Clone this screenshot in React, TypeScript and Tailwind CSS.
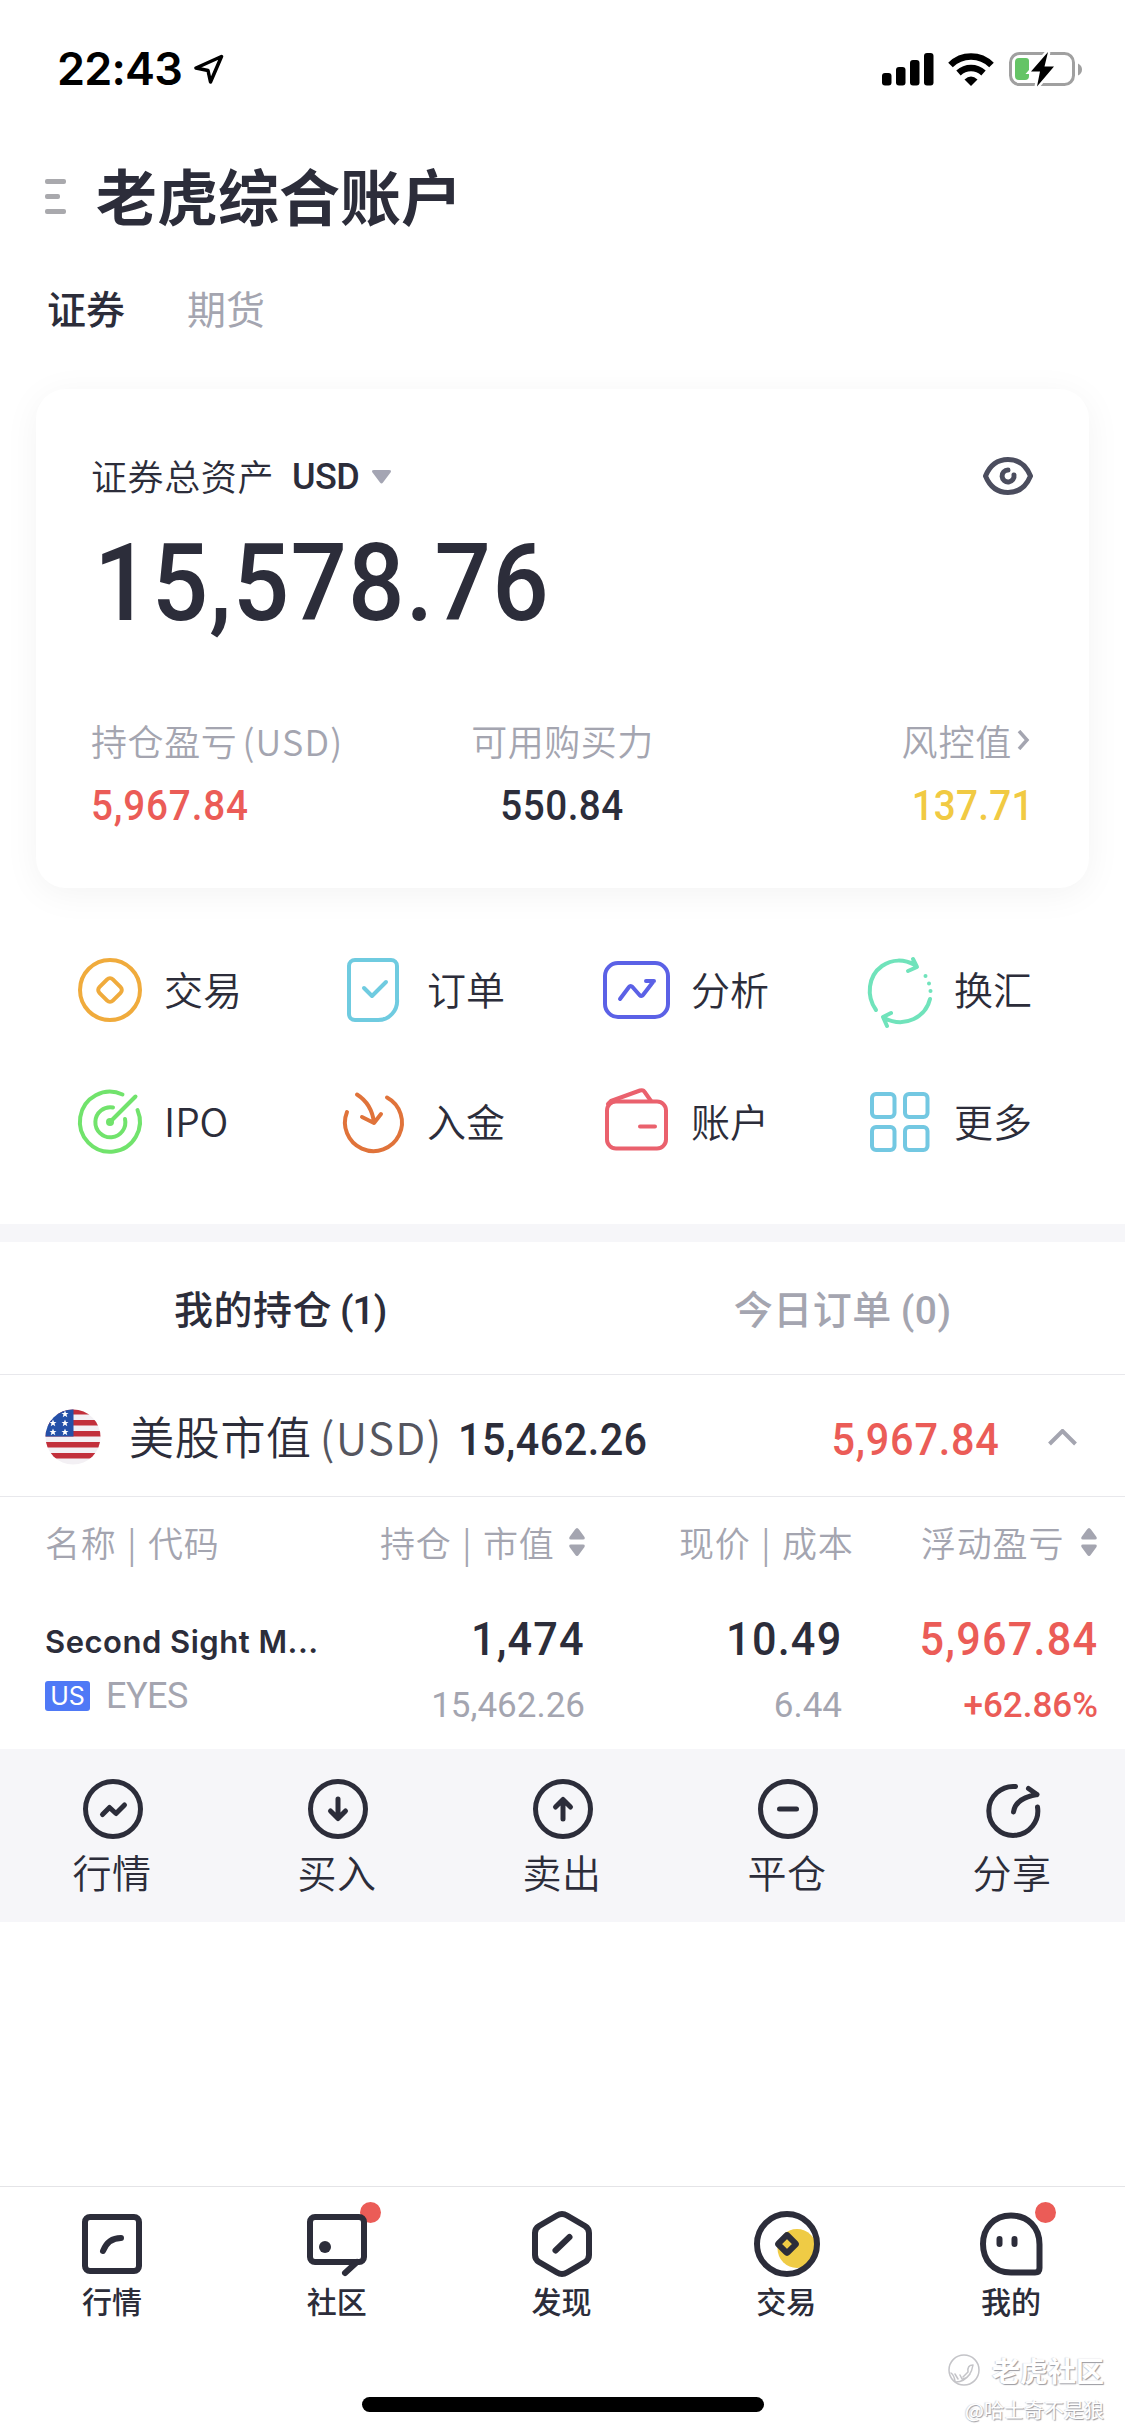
import type { ReactNode } from "react";
import clsx from "clsx";

type IconProps = {
    children: ReactNode
    className?: string
    size?: number
    width?: number
}
// stroke icon drawn at 1:1 pixels
function Icon({ children, className, size = 72, width = 4 }: IconProps) {
    return <svg
        className={clsx("shrink-0 overflow-visible", className)}
        width={size}
        height={size}
        viewBox={`0 0 ${size} ${size}`}
        fill="none"
        stroke="currentColor"
        strokeWidth={width}
        strokeLinecap="round"
        strokeLinejoin="round"
    >
        {children}
    </svg>
}

// slightly condensed figures
function Num({ children, className }: { children: string, className?: string }) {
    return <span className={clsx("inline-block scale-x-[0.92] font-['Roboto'] font-medium", className)}>{children}</span>
}

const shortcuts = [
    {
        label: "交易", color: "text-[#f0ab3c]", icon: <>
            <circle cx="36" cy="36" r="30" />
            <rect x="26.5" y="26.5" width="19" height="19" rx="4" transform="rotate(45 36 36)" />
        </>
    },
    {
        label: "订单", color: "text-[#6fcbe0]", icon: <>
            <path d="M18 6h36a6 6 0 0 1 6 6v33a19 19 0 0 1-19 21H18a6 6 0 0 1-6-6V12a6 6 0 0 1 6-6Z" />
            <path d="M27 34l8 8 14-14" />
        </>
    },
    {
        label: "分析", color: "text-[#5b61e6]", icon: <>
            <rect x="4" y="9" width="63" height="54" rx="13" />
            <path d="M19 45l9-12q1.500-2 3.500 0l7 8q2 2 3.500 0L52 28M45 27h8" />
        </>
    },
    {
        label: "换汇", color: "text-[#70e3bb]", icon: <>
            <path d="M12 56C2 42 4 22 18 12c10-7 22-7 33-1M49 5l4 8-9 4" />
            <path d="M66 45C62 62 42 75 20 64M27 59l-8 4 4 9" />
            <circle cx="61.500" cy="22" r="2" fill="currentColor" stroke="none" />
            <circle cx="65" cy="29.500" r="2" fill="currentColor" stroke="none" />
            <circle cx="66.500" cy="37" r="2" fill="currentColor" stroke="none" />
        </>
    },
    {
        label: "IPO", color: "text-[#71e36c]", icon: <>
            <path d="M48.500 8.500A30 30 0 1 0 63.500 24" />
            <path d="M39 21.500A15 15 0 1 0 51 33" />
            <path d="M36 36L61.500 10.500" />
            <circle cx="36" cy="36" r="4" fill="currentColor" stroke="none" />
        </>
    },
    {
        label: "入金", color: "text-[#e0733a]", icon: <>
            <path d="M10 26A28.500 28.500 0 1 0 50 11.500" />
            <path d="M20 8.500Q35 18 37 37M25 31l12 6 7-9" />
        </>
    },
    {
        label: "账户", color: "text-[#ea616d]", icon: <>
            <rect x="6" y="15.500" width="59" height="47" rx="9" />
            <path d="M7 18l3-3L39 4.500q3.500-1 5 2L50 15M39 40.500h15" />
        </>
    },
    {
        label: "更多", color: "text-[#73c8e2]", icon: <>
            <rect x="8" y="8" width="22.500" height="23" rx="4" />
            <rect x="41" y="8" width="22.500" height="23" rx="4" />
            <rect x="8" y="41" width="22.500" height="23" rx="4" />
            <rect x="41" y="41" width="22.500" height="23" rx="4" />
        </>
    },
];

const actions = [
    { label: "行情", icon: <><circle cx="36" cy="36" r="27.500" /><path d="M25.500 41.500l7-7 6.500 6 8.500-8.500" /></> },
    { label: "买入", icon: <><circle cx="36" cy="36" r="27.500" /><path d="M36 26v19M28.500 38l7.500 7.500 7.500-7.500" /></> },
    { label: "卖出", icon: <><circle cx="36" cy="36" r="27.500" /><path d="M36 46V27M28.500 34l7.500-7.500 7.500 7.500" /></> },
    { label: "平仓", icon: <><circle cx="36" cy="36" r="27.500" /><path d="M27.500 36h17" /></> },
    { label: "分享", icon: <><path d="M38.500 13.500A24.500 24.500 0 1 0 60.500 34" /><path d="M36.500 39Q38.500 25 60 21.500M51.500 15.500l8.500 6" /></> },
];

const tabs = [
    { label: "行情", icon: <><rect x="9" y="9" width="54" height="54" rx="5" /><path d="M27 43q5-13 18-13" /></> },
    {
        label: "社区", dot: true, icon: <>
            <rect x="9" y="9" width="54" height="45" rx="5" />
            <path d="M56 54l-12 11" />
            <circle cx="24" cy="39" r="6" fill="currentColor" stroke="none" />
        </>
    },
    { label: "发现", icon: <><path d="M31 7.500q5-3 10 0l18 10.500q4 2.500 4 7v22q0 4.500-4 7L41 64.500q-5 3-10 0L13 54q-4-2.500-4-7V25q0-4.500 4-7Z" /><path d="M29.500 42.500L43.500 29" /></> },
    {
        label: "交易", icon: <>
            <circle cx="46" cy="40.500" r="19.500" fill="#efcb45" stroke="none" />
            <circle cx="36" cy="36" r="30" />
            <rect x="29.500" y="29.500" width="13" height="13" rx="1" transform="rotate(45 36 36)" />
        </>
    },
    {
        label: "我的", dot: true, icon: <>
            <path d="M35 7.500c17 0 28.500 12 28.500 29V60q0 4.500-4.500 4.500H35C17 64.500 7 52 7 36S18 7.500 35 7.500Z" />
            <path d="M23.500 31v5M38.500 31v5" />
        </>
    },
];

function SortArrows() {
    return <svg className="shrink-0" width="16" height="28" viewBox="0 0 16 28" fill="#a4a5b0">
        <path d="M8 0q1 0 2 1.500L15.500 9q1 2.500-1.500 2.500H2Q-.500 11.500.500 9L6 1.500Q7 0 8 0Z" />
        <path d="M8 28q1 0 2-1.500L15.500 19q1-2.500-1.500-2.500H2Q-.500 16.500.500 19L6 26.500Q7 28 8 28Z" />
    </svg>
}

function StatusBar() {
    return <div className="flex h-[138px] items-center pl-[57px] pr-[43px] text-black">
        <span className="font-['Inter'] text-[45px] font-semibold leading-[60px] tracking-[-0.8px]">22:43</span>
        <svg className="ml-[12px]" width="30" height="30" viewBox="0 0 30 30" fill="none" stroke="black" strokeWidth="3.500" strokeLinejoin="round">
            <path d="M27.500 2.500L2 14l12 2.500 2.500 11.500Z" />
        </svg>
        <svg className="ml-auto" width="52" height="33" viewBox="0 0 52 33" fill="black">
            <rect x="0" y="20" width="9.500" height="12.500" rx="3" />
            <rect x="14" y="14" width="9.500" height="18.500" rx="3" />
            <rect x="28" y="7" width="9.500" height="25.500" rx="3" />
            <rect x="42" y="0" width="9.500" height="32.500" rx="3" />
        </svg>
        <svg className="ml-[14px]" width="46" height="33" viewBox="0 0 46 33" fill="none" stroke="black" strokeWidth="6.500">
            <path d="M2.500 12Q11 3.500 23 3.500T43.500 12" />
            <path d="M10.500 20q5.500-5 12.500-5T35.500 20" />
            <path d="M23 33l-6.500-6.500q6.500-6 13 0Z" fill="black" stroke="none" />
        </svg>
        <svg className="ml-[15px]" width="73" height="36" viewBox="0 0 73 36">
            <rect x="1.500" y="2.500" width="63" height="31" rx="9" fill="none" stroke="#a0a0a0" strokeWidth="3" />
            <path d="M69 12.500q4 2 4 6t-4 6Z" fill="#a0a0a0" />
            <path d="M10 7h7q3 0 3 3v15q0 4-4 4h-6q-4 0-4-4V11q0-4 4-4Z" fill="#65c466" />
            <path d="M39 1L22 20.500H31L28 35.500 45 15.500H35.500Z" fill="black" stroke="white" strokeWidth="5" paintOrder="stroke" />
        </svg>
    </div>
}

function AssetCard() {
    return <section className="mx-9 mt-[41px] h-[499px] rounded-[30px] bg-white px-[55px] shadow-[0_6px_36px_rgba(0,0,0,0.05)]">
        <div className="flex h-[174px] items-center text-[36px] tracking-[0.6px]">
            <span className="-mt-[2px] font-[350]">证券总资产</span>
            <span className="relative top-[1px] ml-[18px] font-['Roboto'] text-[36px] font-medium tracking-[-0.5px]">USD</span>
            <svg className="ml-[13px] mt-[2px]" width="19" height="14" viewBox="0 0 19 14" fill="#a4a5b3">
                <path d="M2 0h15q3 0 1.500 2.500L11 12.500q-1.500 2-3 0L.500 2.500Q-1 0 2 0Z" />
            </svg>
            <svg className="ml-auto mr-[1px]" width="50" height="38" viewBox="0 0 50 38" fill="none" stroke="#4b4d5e" strokeWidth="5" strokeLinecap="round">
                <path d="M2.500 19C7 8 15 2.500 25 2.500S43 8 47.500 19C43 30 35 35.500 25 35.500S7 30 2.500 19Z" strokeLinejoin="round" />
                <path d="M25 13A6 6 0 1 0 31 18" />
            </svg>
        </div>
        <div className="-mt-[35px] h-[110px] pl-[3px] text-[108px] leading-[110px]">
            <Num className="origin-left align-top tracking-[1.3px]">15,578.76</Num>
        </div>
        <div className="mt-[78px] flex items-start justify-between text-[36px] font-[350] leading-[48px] text-[#a4a5b0]">
            <div className="w-[351px]">
                <div className="tracking-[0.6px]">持仓盈亏<span className="ml-[5px] tracking-[1.2px]">(USD)</span></div>
                <Num className="mt-[18px] origin-left text-[42px] tracking-[0.9px] text-[#eb5c57]">5,967.84</Num>
            </div>
            <div className="w-[239px] text-center">
                <div className="tracking-[0.5px]">可用购买力</div>
                <Num className="mt-[18px] text-[42px] tracking-[0.5px] text-[#2c2d3a]">550.84</Num>
            </div>
            <div className="w-[351px] text-right">
                <div className="flex items-center justify-end gap-[5px] pr-[4px] tracking-[0.8px]">
                    风控值
                    <svg width="13" height="20" viewBox="0 0 13 20" fill="none" stroke="currentColor" strokeWidth="3.500"><path d="M2 1l8 9-8 9" /></svg>
                </div>
                <Num className="mt-[18px] origin-right text-[42px] tracking-[0.3px] text-[#f1ca43]">137.71</Num>
            </div>
        </div>
    </section>
}

function Flag() {
    return <svg className="mt-[3px] shrink-0" width="56" height="56" viewBox="0 0 56 56">
        <clipPath id="flag"><circle cx="28" cy="28" r="27.500" /></clipPath>
        <g clipPath="url(#flag)">
            <rect width="56" height="56" fill="#f3f0f4" />
            {[0, 11, 22, 33, 44].map((y) => <rect key={y} y={y} width="56" height="5.500" fill="#c22f3b" />)}
            <rect width="28.500" height="27.500" fill="#2450a8" />
            {[[20, 5], [8, 14], [20, 14], [8, 23], [20, 23]].map(([x, y]) =>
                <path key={`${x}-${y}`} transform={`translate(${x} ${y})`} fill="white" d="M0-3.500l1 2.400h2.500l-2 1.600.8 2.700L0 1.700l-2.300 1.500.8-2.700-2-1.600H-1Z" />
            )}
        </g>
    </svg>
}

function Holdings() {
    return <>
        <div className="grid h-[133px] grid-cols-2 border-b border-[#e8e8ec] text-[39px] leading-[131px] tracking-[0.5px]">
            <div className="pr-[2px] text-center font-medium">我的持仓<span className="ml-[8px] font-['Roboto'] tracking-[-1px]">(1)</span></div>
            <div className="pr-[2px] text-center font-medium text-[#a4a5b0]">今日订单<span className="ml-[9px] font-['Roboto']">(0)</span></div>
        </div>
        <div className="flex h-[122px] items-center border-b border-[#e8e8ec] pl-[45px] pr-12">
            <Flag />
            <span className="ml-[28px] text-[45px] font-[350] tracking-[0.7px]">美股市值</span>
            <span className="ml-2 text-[44px] font-[350] tracking-[1.3px] text-[#55565f]">(USD)</span>
            <Num className="ml-[15px] mt-[9px] origin-left text-[45px] tracking-[0.5px]">15,462.26</Num>
            <Num className="ml-auto mt-[9px] origin-right text-[45px] tracking-[0.8px] text-[#eb5c57]">5,967.84</Num>
            <svg className="ml-[49px] mt-[3px]" width="29" height="17" viewBox="0 0 29 17" fill="none" stroke="#a4a5b0" strokeWidth="4"><path d="M1.500 15L14.500 2l13 13" /></svg>
        </div>
        <div className="flex h-[90px] items-center text-[35px] font-[350] tracking-[0.8px] text-[#a4a5b0] [word-spacing:2px]">
            <div className="w-[380px] pl-[45px]">名称 | 代码</div>
            <div className="flex w-[299px] items-center gap-[14px]">持仓 | 市值<SortArrows /></div>
            <div className="w-[242px]">现价 | 成本</div>
            <div className="flex items-center gap-[17px]">浮动盈亏<SortArrows /></div>
        </div>
        <div className="flex h-[162px] pt-[2px]">
            <div className="w-[345px] pl-[45px] pt-[30px]">
                <div className="font-['Inter'] text-[31px] font-semibold leading-[46px] tracking-[0.5px]">Second Sight M...</div>
                <div className="mt-[13px] flex items-center gap-[16px]">
                    <span className="h-[30px] w-[45px] rounded-[3px] bg-[#4f79f6] text-center font-['Inter'] text-[25px] leading-[30px] text-white">US</span>
                    <span className="font-['Roboto'] text-[36px] leading-[36px] tracking-[-0.5px] text-[#a4a5b0]">EYES</span>
                </div>
            </div>
            <Cell top="1,474" bottom="15,462.26" className="w-[240px]" />
            <Cell top="10.49" bottom="6.44" className="w-[257px]" />
            <Cell top="5,967.84" bottom="+62.86%" className="w-[256px]" red />
        </div>
    </>
}

type CellProps = {
    top: string
    bottom: string
    className: string
    red?: boolean
}
function Cell({ top, bottom, className, red }: CellProps) {
    return <div className={clsx("pt-[20px] text-right font-['Roboto']", className, red && "text-[#eb5c57]")}>
        <div className="h-[60px] text-[47px] leading-[60px]">
            <Num className="origin-right tracking-[1.3px]">{top}</Num>
        </div>
        <div className={clsx("mt-[15px] text-[35px] leading-[44px]", red ? "font-medium" : "text-[#a4a5b0]")}>{bottom}</div>
    </div>
}

function TabBar() {
    return <nav className="grid h-[166px] grid-cols-5 border-t border-[#e4e4e7] pr-[1px] pt-[21px]">
        {tabs.map((tab) => <div key={tab.label} className="flex flex-col items-center">
            <div className="relative">
                {tab.dot && <span className="absolute right-[-8px] top-[-6px] size-[21px] rounded-full bg-[#eb5c57]" />}
                <Icon width={6} className="relative">{tab.icon}</Icon>
            </div>
            <span className="-mt-[2px] pr-[1px] text-[30px] font-medium leading-[44px]">{tab.label}</span>
        </div>)}
    </nav>
}

export default function App() {
    return <div className="relative flex h-[2436px] w-[1125px] flex-col overflow-hidden bg-white font-['Noto_Sans_CJK_SC',sans-serif] text-[#2c2d3a]">
        <StatusBar />
        <header className="flex h-[118px] items-center pl-[45px]">
            <svg width="21" height="36" viewBox="0 0 21 36" fill="#a9a9ad">
                <rect y="0" width="21" height="5" rx="2" />
                <rect y="15" width="15" height="5" rx="2" />
                <rect y="30" width="21" height="5" rx="2" />
            </svg>
            <h1 className="-mt-[4px] ml-[30px] text-[61px] font-bold leading-[80px]">老虎综合账户</h1>
        </header>
        <div className="mt-[10px] flex h-[82px] items-center gap-[62px] pl-[47px] text-[39px] font-medium">
            <span>证券</span>
            <span className="font-normal text-[#a4a5b0]">期货</span>
        </div>
        <AssetCard />
        <div className="mt-[36px] grid h-[300px] grid-cols-[263px_264px_263px_264px] grid-rows-[132px_132px] pl-[74px]">
            {shortcuts.map((item) => <div key={item.label} className="flex items-center gap-[18px]">
                <Icon className={item.color}>{item.icon}</Icon>
                <span className="-mt-[5px] text-[39px] font-[350] leading-[56px]">{item.label}</span>
            </div>)}
        </div>
        <div className="h-[18px] bg-[#f6f6f9]" />
        <Holdings />
        <div className="grid h-[173px] grid-cols-5 bg-[#f6f6f9] pt-[24px]">
            {actions.map((item) => <div key={item.label} className="flex flex-col items-center">
                <Icon width={5}>{item.icon}</Icon>
                <span className="-mt-[2px] pr-[1px] text-[39px] font-[350] leading-[56px] tracking-[0.5px]">{item.label}</span>
            </div>)}
        </div>
        <div className="flex-1" />
        <TabBar />
        <div className="h-[84px] pt-[45px]">
            <div className="mx-auto h-[15px] w-[402px] rounded-full bg-black" />
        </div>
        <div className="absolute bottom-[11px] right-[21px] flex flex-col items-end text-white [text-shadow:1px_1px_1px_#9a9aa0,-1px_0_1px_#d8d8dc]">
            <div className="flex items-center gap-[12px]">
                <Icon size={32} width={1.5} className="text-[#c4c4c8]">
                    <circle cx="16" cy="16" r="15" />
                    <path d="M3 19q3 2 4 8M7 20l3 5M12 21l2 4M15 25q8-2 10-14q-6 0-5 7l-5 5M8 28q8 0 14-8" />
                </Icon>
                <span className="text-[28px] font-bold leading-[40px]">老虎社区</span>
            </div>
            <span className="mt-[5px] text-[20px] leading-[30px]">@哈士奇不是狼</span>
        </div>
    </div>
}
